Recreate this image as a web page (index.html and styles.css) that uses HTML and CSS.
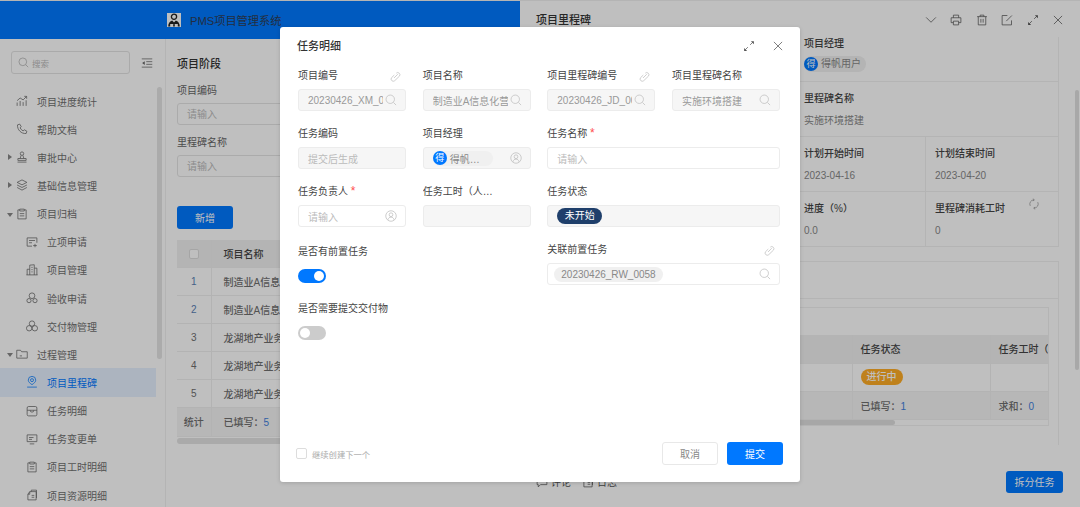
FILE: index.html
```html
<!DOCTYPE html>
<html lang="en">
<head>
    <meta charset="UTF-8">
    <meta name="viewport" content="width=device-width, initial-scale=1.0">
    <title>任务明细</title>
    <link rel="stylesheet" href="styles.css">
</head>
<body>

    <!-- icons -->
    <svg class="sprite" xmlns="http://www.w3.org/2000/svg">
        <symbol id="i-search" viewBox="0 0 16 16"><circle cx="7" cy="7" r="5.6"/><path d="M11.2 11.2 14.8 14.8"/></symbol>
        <symbol id="i-link" viewBox="0 0 16 16"><path d="M6.200 9.800 10.800 5.200M9 3.800a2.700 2.700 0 0 1 3.800 3.800L7 13.200a2.700 2.700 0 0 1-3.800-3.800L6.500 6.200"/></symbol>
        <symbol id="i-user" viewBox="0 0 16 16"><circle cx="8" cy="8" r="7"/><circle cx="8" cy="6.300" r="2.500"/><path d="M3.800 13.200c.6-2.500 2.200-3.700 4.200-3.700s3.600 1.200 4.200 3.700"/></symbol>
        <symbol id="i-expand" viewBox="0 0 16 16"><path d="M9.500 6.500 13 3M6.500 9.500 3 13"/><path class="solid" d="M10.500 1.500h4v4zM1.500 10.500v4h4z"/></symbol>
        <symbol id="i-close" viewBox="0 0 16 16"><path d="M2.500 2.500 13.500 13.500M13.500 2.500 2.500 13.500"/></symbol>
        <symbol id="i-down" viewBox="0 0 16 16"><path d="M1.500 4.500 8 11l6.500-6.500"/></symbol>
        <symbol id="i-print" viewBox="0 0 16 16"><path d="M4.500 5V1.500h7V5M4.500 11.500H1.500V5h13v6.500h-3"/><path d="M4.500 9.500h7v5h-7z"/></symbol>
        <symbol id="i-trash" viewBox="0 0 16 16"><path d="M1.500 3.500h13M5.500 3.500v-2h5v2M3 3.500v11h10v-11M6.500 6.500v5M9.500 6.500v5"/></symbol>
        <symbol id="i-edit" viewBox="0 0 16 16"><path d="M14 8.500v6H1.500V2h7"/><path d="M7 9.500 14.500 2"/></symbol>
        <symbol id="i-refresh" viewBox="0 0 16 16"><path d="M3 10.500a5.500 5.500 0 0 1 5-8M13 5.500a5.500 5.500 0 0 1-5 8"/><path d="M6.500 1 8.500 2.500 6.500 4M9.500 12 7.500 13.500 9.500 15"/></symbol>
        <symbol id="i-fold" viewBox="0 0 16 16"><path d="M1 2.500h14M7 6.200h8M7 9.800h8M1 13.500h14"/><path class="solid" d="M5 5.500v5L1.500 8z"/></symbol>
        <symbol id="i-trend" viewBox="0 0 16 16"><path d="M1.500 14.500V10M5.500 14.500V8M9.500 14.500V9.500M13.500 14.500V7"/><path d="M1.500 7.500 5.500 4 9.500 6.500 14 2M11 1.800h3.200V5"/></symbol>
        <symbol id="i-phone" viewBox="0 0 16 16"><path d="M2 2.500 5 1.500l2 3.500-1.500 1.500c.8 1.800 2.200 3.200 4 4L11 9l3.500 2-1 3c-6.500.6-12-5-11.500-11.500z"/></symbol>
        <symbol id="i-stamp" viewBox="0 0 16 16"><circle cx="8" cy="3.500" r="2.300"/><path d="M6.800 5.800 5.500 10M9.200 5.800 10.500 10M2.500 10h11v2.500h-11zM2 14.800h12"/></symbol>
        <symbol id="i-layers" viewBox="0 0 16 16"><path d="M8 1.200 14.500 4.500 8 7.800 1.500 4.500z"/><path d="M1.500 8 8 11.300 14.500 8M1.500 11.300 8 14.800 14.500 11.300"/></symbol>
        <symbol id="i-clip" viewBox="0 0 16 16"><path d="M5 2.500H2.500v12h11v-12H11"/><path d="M5 1.500h6v2.500H5zM5 7.500h6M5 10.500h6"/></symbol>
        <symbol id="i-apply" viewBox="0 0 16 16"><path d="M8 13.500H1.500v-11h13v6.500"/><path d="M4 6h8M4 9h4M12 10.500v4.500M9.500 12.800h5"/></symbol>
        <symbol id="i-build" viewBox="0 0 16 16"><path d="M5 14.500V1.500l6-.5v13.500M5 7H1.500v7.500M11 5.500h3.500v9M.5 14.500h15M7.200 4.500h1.600M7.200 7.500h1.600M7.200 10.500h1.600"/></symbol>
        <symbol id="i-ring" viewBox="0 0 16 16"><circle cx="8" cy="5" r="3.800"/><circle cx="4" cy="11.500" r="2.800"/><circle cx="12" cy="11.500" r="2.800"/></symbol>
        <symbol id="i-tri" viewBox="0 0 16 16"><circle cx="8" cy="4.800" r="3.600"/><circle cx="4.200" cy="11" r="3.600"/><circle cx="11.800" cy="11" r="3.600"/></symbol>
        <symbol id="i-folder" viewBox="0 0 16 16"><path d="M1 3h5l1.500 2h7.500v8.500H1z"/><path d="M5 10.500h3"/></symbol>
        <symbol id="i-pin" viewBox="0 0 16 16"><path d="M8 11.500C5 9.500 3 7.800 3 5.500a5 5 0 0 1 10 0c0 2.300-2 4-5 6z"/><circle cx="8" cy="5.500" r="2"/><path d="M1.500 14.800h13"/></symbol>
        <symbol id="i-box" viewBox="0 0 16 16"><rect x="1.500" y="2" width="13" height="12.500" rx="2"/><path d="M1.500 7h13M5.500 7a2.500 2.500 0 0 0 5 0"/></symbol>
        <symbol id="i-screen" viewBox="0 0 16 16"><path d="M1.500 2.500h13v9h-13zM4 6h6M4 8.500h4M5 14.500h6"/></symbol>
        <symbol id="i-doc" viewBox="0 0 16 16"><path d="M5 3.500h8.500v11H2.500V7zM5 3.500V7H2.500M7 3.500V1.500h7V12M7.500 8.500h3.500M7.500 11h3.500"/></symbol>
        <symbol id="i-comment" viewBox="0 0 16 16"><path d="M1.500 2.500h13v9H6l-3 3v-3H1.500z"/></symbol>
    </svg>

    <div class="app">
        <header class="topbar">
            <svg class="logo" viewBox="0 0 14 14">
                <rect width="14" height="14" fill="#fff"/>
                <circle cx="7" cy="3.800" r="2.600" fill="none" stroke="#222" stroke-width="1.300"/>
                <path d="M1.200 13.500c0-3.500 1.800-5.500 4-6L7 9.500l1.800-2c2.200.5 4 2.500 4 6h-2V11h-7.600v2.500z" fill="#222"/>
                <path d="M6.500 9.500h1l.4 4H6.100z" fill="#222"/>
            </svg>
            <span class="brand">PMS项目管理系统</span>
        </header>

        <div class="main">
            <aside class="sidebar">
                <div class="side-top">
                    <div class="side-search">
                        <svg class="ico"><use href="#i-search"/></svg>
                        <span>搜索</span>
                    </div>
                    <svg class="ico fold"><use href="#i-fold"/></svg>
                </div>
                <div class="side-wrap">
                    <ul class="menu">
                        <li><svg class="ico"><use href="#i-trend"/></svg>项目进度统计</li>
                        <li><svg class="ico"><use href="#i-phone"/></svg>帮助文档</li>
                        <li class="closed"><svg class="ico"><use href="#i-stamp"/></svg>审批中心</li>
                        <li class="closed"><svg class="ico"><use href="#i-layers"/></svg>基础信息管理</li>
                        <li class="open"><svg class="ico"><use href="#i-clip"/></svg>项目归档</li>
                        <li class="sub"><svg class="ico"><use href="#i-apply"/></svg>立项申请</li>
                        <li class="sub"><svg class="ico"><use href="#i-build"/></svg>项目管理</li>
                        <li class="sub"><svg class="ico"><use href="#i-ring"/></svg>验收申请</li>
                        <li class="sub"><svg class="ico"><use href="#i-tri"/></svg>交付物管理</li>
                        <li class="open"><svg class="ico"><use href="#i-folder"/></svg>过程管理</li>
                        <li class="sub active"><svg class="ico"><use href="#i-pin"/></svg>项目里程碑</li>
                        <li class="sub"><svg class="ico"><use href="#i-box"/></svg>任务明细</li>
                        <li class="sub"><svg class="ico"><use href="#i-screen"/></svg>任务变更单</li>
                        <li class="sub"><svg class="ico"><use href="#i-clip"/></svg>项目工时明细</li>
                        <li class="sub"><svg class="ico"><use href="#i-doc"/></svg>项目资源明细</li>
                    </ul>
                    <div class="side-thumb"></div>
                </div>
            </aside>

            <section class="content">
                <h3 class="content-title">项目阶段</h3>
                <div class="filter-label">项目编码</div>
                <div class="filter-input">请输入</div>
                <div class="filter-label">里程碑名称</div>
                <div class="filter-input">请输入</div>
                <button class="btn btn-primary add-btn">新增</button>
                <table class="list">
                    <tr><th class="idx"><span class="check"></span></th><th>项目名称</th></tr>
                    <tr><td class="idx num">1</td><td>制造业A信息化</td></tr>
                    <tr><td class="idx num">2</td><td>制造业A信息化</td></tr>
                    <tr><td class="idx">3</td><td>龙湖地产业务</td></tr>
                    <tr><td class="idx">4</td><td>龙湖地产业务</td></tr>
                    <tr><td class="idx">5</td><td>龙湖地产业务</td></tr>
                    <tr class="sum"><td class="idx">统计</td><td>已填写：<em>5</em></td></tr>
                </table>
                <div class="list-scroll"></div>
            </section>
        </div>

        <!-- milestone drawer -->
        <aside class="drawer">
            <div class="drawer-head">
                <h3>项目里程碑</h3>
                <div class="drawer-tools">
                    <svg class="ico"><use href="#i-down"/></svg>
                    <svg class="ico"><use href="#i-print"/></svg>
                    <svg class="ico"><use href="#i-trash"/></svg>
                    <svg class="ico"><use href="#i-edit"/></svg>
                    <svg class="ico"><use href="#i-expand"/></svg>
                    <svg class="ico"><use href="#i-close"/></svg>
                </div>
            </div>
            <div class="drawer-body">
                <div class="info-row first">
                    <div class="info"><b>项目经理</b><span class="person"><i class="avatar">得</i>得帆用户</span></div>
                </div>
                <div class="info-row">
                    <div class="info"><b>里程碑名称</b><span>实施环境搭建</span></div>
                </div>
                <div class="info-row two">
                    <div class="info"><b>计划开始时间</b><span>2023-04-16</span></div>
                    <div class="info"><b>计划结束时间</b><span>2023-04-20</span></div>
                </div>
                <div class="info-row two">
                    <div class="info"><b>进度（%）</b><span>0.0</span></div>
                    <div class="info"><b>里程碑消耗工时</b><span>0</span></div>
                    <svg class="ico refresh"><use href="#i-refresh"/></svg>
                </div>
                <div class="panel">
                    <div class="panel-head"></div>
                    <div class="task-box">
                        <div class="task-title"></div>
                        <table class="tasks">
                            <colgroup><col class="c1"><col class="c2"><col class="c3"></colgroup>
                            <tr><th>任务名称</th><th>任务状态</th><th>任务工时（人天）</th></tr>
                            <tr><td></td><td><span class="state">进行中</span></td><td></td></tr>
                            <tr class="sum"><td></td><td>已填写：<em>1</em></td><td>求和：<em>0</em></td></tr>
                        </table>
                        <div class="task-scroll"></div>
                    </div>
                </div>
            </div>
            <div class="drawer-foot">
                <div class="foot-tabs">
                    <svg class="ico"><use href="#i-comment"/></svg><span>评论</span>
                    <svg class="ico"><use href="#i-doc"/></svg><span>日志</span>
                </div>
                <button class="btn btn-dark">拆分任务</button>
            </div>
            <div class="drawer-thumb"></div>
        </aside>
    </div>

    <div class="mask"></div>

    <div class="modal">
        <div class="modal-head">
            <h3>任务明细</h3>
            <div class="modal-tools">
                <svg class="ico expand"><use href="#i-expand"/></svg>
                <svg class="ico close"><use href="#i-close"/></svg>
            </div>
        </div>

        <div class="form">
            <div class="field">
                <label>项目编号 <svg class="ico link"><use href="#i-link"/></svg></label>
                <div class="input off"><span class="val">20230426_XM_0058</span><svg class="ico"><use href="#i-search"/></svg></div>
            </div>
            <div class="field">
                <label>项目名称</label>
                <div class="input off"><span class="val">制造业A信息化营销项目</span><svg class="ico"><use href="#i-search"/></svg></div>
            </div>
            <div class="field">
                <label>项目里程碑编号 <svg class="ico link"><use href="#i-link"/></svg></label>
                <div class="input off"><span class="val">20230426_JD_0058</span><svg class="ico"><use href="#i-search"/></svg></div>
            </div>
            <div class="field">
                <label>项目里程碑名称</label>
                <div class="input off"><span class="val">实施环境搭建</span><svg class="ico"><use href="#i-search"/></svg></div>
            </div>

            <div class="field">
                <label>任务编码</label>
                <div class="input off"><span class="val hint">提交后生成</span></div>
            </div>
            <div class="field">
                <label>项目经理</label>
                <div class="input off">
                    <span class="val"><span class="chip user"><i class="avatar">得</i>得帆…</span></span>
                    <svg class="ico"><use href="#i-user"/></svg>
                </div>
            </div>
            <div class="field wide">
                <label><span>任务名称 <em class="req">*</em></span></label>
                <div class="input"><span class="val hint">请输入</span></div>
            </div>

            <div class="field">
                <label><span>任务负责人 <em class="req">*</em></span></label>
                <div class="input"><span class="val hint">请输入</span><svg class="ico"><use href="#i-user"/></svg></div>
            </div>
            <div class="field">
                <label><span class="cut">任务工时（人天）</span></label>
                <div class="input off"></div>
            </div>
            <div class="field wide">
                <label>任务状态</label>
                <div class="input off"><span class="state navy">未开始</span></div>
            </div>

            <div class="field wide switch-field">
                <label>是否有前置任务</label>
                <span class="switch on"></span>
            </div>
            <div class="field wide">
                <label>关联前置任务 <svg class="ico link"><use href="#i-link"/></svg></label>
                <div class="input chips"><span class="val"><span class="chip">20230426_RW_0058</span></span><svg class="ico"><use href="#i-search"/></svg></div>
            </div>

            <div class="field wide switch-field tight">
                <label>是否需要提交交付物</label>
                <span class="switch"></span>
            </div>
        </div>

        <div class="modal-foot">
            <div class="next"><span class="check"></span>继续创建下一个</div>
            <div class="modal-btns">
                <button class="btn btn-plain">取消</button>
                <button class="btn btn-primary">提交</button>
            </div>
        </div>
    </div>

</body>
</html>
```

FILE: styles.css
```css
* {
    box-sizing: border-box;
}
html, body {
    height: 100%;
}
body {
    margin: 0;
    overflow: hidden;
    font-family: "Liberation Sans", "Noto Sans CJK SC", sans-serif;
    font-size: 10px;
    color: #555;
    background-color: #fff;
}
h3 {
    margin: 0;
    font-size: 11px;
    font-weight: 500;
    color: #333;
}
em {
    font-style: normal;
}
ul {
    margin: 0;
    padding: 0;
    list-style: none;
}
.sprite {
    display: none;
}
.ico {
    flex: none;
    width: 12px;
    height: 12px;
    fill: none;
    stroke: #bdbdbd;
    stroke-width: 1;
}
.solid {
    fill: currentColor;
    stroke: none;
}

.app {
    position: relative;
    height: 100%;
    display: flex;
    flex-direction: column;
}
.mask {
    position: absolute;
    inset: 0;
    background-color: rgba(0, 0, 0, 0.25);
}

/* top bar */
.topbar {
    flex: none;
    height: 39px;
    padding-left: 167px;
    display: flex;
    align-items: center;
    gap: 9px;
    background-color: #0078ff;
    border-top: 1px solid #f0f0f0;
}
.logo {
    width: 14px;
    height: 14px;
}
.brand {
    font-size: 11.2px;
    color: #2f3d55;
}

.main {
    flex: 1;
    min-height: 0;
    display: flex;
}

/* sidebar */
.sidebar {
    flex: none;
    width: 166px;
    border-right: 1px solid #f0f0f0;
    overflow: hidden;
}
.side-top {
    display: flex;
    align-items: center;
    gap: 11px;
    padding: 12px 0 0 11px;
}
.side-search {
    width: 119px;
    height: 23px;
    padding-left: 6px;
    display: flex;
    align-items: center;
    gap: 3px;
    border: 1px solid #e3e3e3;
    border-radius: 3px;
    font-size: 8.5px;
    color: #bbb;
}
.side-search .ico {
    width: 11px;
    height: 11px;
    stroke: #aaa;
}
.fold {
    color: #666;
    stroke: #666;
}
.side-wrap {
    display: flex;
    padding-top: 13px;
}
.menu {
    flex: none;
    width: 156px;
}
.menu li {
    position: relative;
    height: 28.15px;
    padding-left: 37px;
    display: flex;
    align-items: center;
    color: #6f6f6f;
    white-space: nowrap;
}
.menu .ico {
    position: absolute;
    left: 16px;
    top: 8px;
    stroke: #666;
}
.menu .sub {
    padding-left: 47px;
}
.menu .sub .ico {
    left: 26px;
}
.menu .closed::before,
.menu .open::before {
    content: "";
    position: absolute;
    border-style: solid;
    border-color: transparent;
}
.menu .closed::before {
    left: 8px;
    top: 11px;
    border-width: 3px 0 3px 4px;
    border-left-color: #888;
}
.menu .open::before {
    left: 7px;
    top: 13px;
    border-width: 4px 3px 0 3px;
    border-top-color: #888;
}
.menu .active {
    color: #0078ff;
    background-color: #e6f1ff;
}
.menu .active .ico {
    stroke: #0078ff;
}
.side-thumb {
    flex: none;
    width: 5px;
    height: 272px;
    margin-left: 1px;
    border-radius: 3px;
    background-color: #e4e4e4;
}

/* page content behind the drawer */
.content {
    flex: 1;
    padding: 16px 0 0 11px;
    overflow: hidden;
}
.content-title {
    height: 16px;
    line-height: 18px;
}
.filter-label {
    height: 14px;
    margin-top: 12px;
    line-height: 16px;
    color: #666;
}
.filter-input {
    width: 260px;
    height: 22px;
    margin-top: 6px;
    padding-left: 9px;
    line-height: 22px;
    border: 1px solid #e5e5e5;
    border-radius: 3px;
    color: #bbb;
}
.filter-input + .filter-label {
    margin-top: 10px;
}
.btn {
    height: 23px;
    padding: 0;
    border: 0;
    border-radius: 3px;
    font: inherit;
    cursor: pointer;
}
.btn-primary {
    width: 56px;
    color: #fff;
    background-color: #0078ff;
}
.btn-plain {
    width: 56px;
    color: #888;
    background-color: #fff;
    border: 1px solid #e8e8e8;
}
.add-btn {
    display: block;
    margin-top: 29px;
}
.list {
    width: 343px;
    margin-top: 11px;
    border-collapse: collapse;
    table-layout: fixed;
}
.list th, .list td {
    height: 28px;
    padding: 0 0 0 12px;
    text-align: left;
    font-weight: 500;
    white-space: nowrap;
    overflow: hidden;
    border-bottom: 1px solid #efefef;
    color: #6f6f6f;
}
.list th {
    height: 27px;
    background-color: #f0f0f0;
    color: #444;
}
.list .idx {
    width: 34px;
    padding: 0;
    text-align: center;
    border-right: 1px solid #efefef;
}
.list .num {
    color: #5b7fb5;
}
.list .sum td {
    height: 29px;
    background-color: #f5f5f5;
}
.list em, .tasks em {
    color: #3f7fdc;
}
.check {
    display: inline-block;
    width: 10px;
    height: 10px;
    border: 1px solid #ddd;
    border-radius: 2px;
    background-color: #fff;
    vertical-align: middle;
}
.list-scroll {
    width: 343px;
    height: 6px;
    margin-top: 1px;
    border-radius: 3px;
    background-color: #e3e3e3;
}

/* drawer */
.drawer {
    position: absolute;
    left: 520px;
    top: 0;
    right: 0;
    bottom: 0;
    display: flex;
    flex-direction: column;
    background-color: #fff;
    border-top: 1px solid #f0f0f0;
}
.drawer-head {
    flex: none;
    height: 36px;
    padding: 0 16px 0 16px;
    display: flex;
    align-items: center;
    justify-content: space-between;
}
.drawer-tools {
    display: flex;
    gap: 13.5px;
    margin-top: 2px;
}
.drawer-tools .ico {
    stroke: #555;
    color: #555;
}
.drawer-body {
    flex: 1;
    min-height: 0;
    padding: 0 21px 0 16px;
    overflow: hidden;
}
.info-row {
    position: relative;
    height: 55px;
    padding-left: 268px;
    display: flex;
    border-bottom: 1px solid #f0f0f0;
    border-right: 1px solid #f0f0f0;
}
.info {
    flex: 1;
    padding-top: 10px;
    line-height: 14px;
}
.info b {
    display: block;
    margin-bottom: 8px;
    font-weight: 500;
    color: #444;
}
.info span {
    display: block;
    color: #888;
}
.info-row.two .info:first-child {
    flex: none;
    width: 121px;
}
.info-row.two .info + .info {
    padding-left: 9px;
    border-left: 1px solid #f0f0f0;
}
.info-row.first {
    height: 45px;
}
.info-row.first .info {
    padding-top: 0;
}
.info-row.first b {
    margin-bottom: 5px;
}
.info .person {
    display: inline-flex;
    align-items: center;
    gap: 3px;
    height: 16px;
    width: 62px;
    border-radius: 8px;
    background-color: #f0f0f0;
}
.avatar {
    flex: none;
    width: 14px;
    height: 14px;
    border-radius: 50%;
    font-style: normal;
    font-size: 9px;
    line-height: 14px;
    text-align: center;
    color: #fff;
    background-color: #0078ff;
}
.refresh {
    position: absolute;
    right: 18px;
    top: 6px;
    stroke: #999;
}
.panel {
    height: 184px;
    margin-top: 14px;
    padding: 0 9px;
    border: 1px solid #f0f0f0;
    border-bottom: 0;
}
.panel-head {
    height: 37px;
    margin: 0 -9px 8px;
    border-bottom: 1px solid #f0f0f0;
}
.task-box {
    border: 1px solid #f0f0f0;
    overflow: hidden;
}
.task-title {
    height: 27px;
}
.tasks {
    width: 502px;
    border-collapse: collapse;
    table-layout: fixed;
}
.tasks .c1 {
    width: 305px;
}
.tasks .c2 {
    width: 138px;
}
.tasks th, .tasks td {
    height: 28px;
    padding: 0 0 0 8px;
    text-align: left;
    font-weight: 500;
    white-space: nowrap;
    overflow: hidden;
    color: #6f6f6f;
    border-right: 1px solid #efefef;
    border-bottom: 1px solid #efefef;
}
.tasks th {
    background-color: #f0f0f0;
    color: #444;
}
.tasks .sum td {
    background-color: #f5f5f5;
}
.state {
    display: inline-block;
    height: 16px;
    padding: 0 6px;
    line-height: 16px;
    border-radius: 8px;
    color: #fff;
    background-color: #ffad26;
}
.state.navy {
    padding: 0 7.5px;
    background-color: #1f3f6b;
}
.task-scroll {
    height: 5px;
    width: 143px;
    margin-left: 205px;
    border-radius: 3px;
    background-color: #dfdfdf;
}
.drawer-foot {
    flex: none;
    height: 36px;
    padding: 0 17px 15px 16px;
    display: flex;
    align-items: center;
    justify-content: space-between;
}
.foot-tabs {
    display: flex;
    align-items: center;
    gap: 3px;
    color: #555;
}
.foot-tabs span {
    margin-right: 8px;
}
.foot-tabs .ico {
    stroke: #555;
}
.btn-dark {
    width: 57px;
    height: 22px;
    color: #fff;
    background-color: #0078ff;
}
.drawer-thumb {
    position: absolute;
    right: 1px;
    top: 89px;
    width: 4px;
    height: 280px;
    border-radius: 2px;
    background-color: #e0e0e0;
}

/* modal */
.modal {
    position: absolute;
    left: 280px;
    top: 27px;
    width: 520px;
    height: 455px;
    display: flex;
    flex-direction: column;
    border-radius: 3px;
    background-color: #fff;
    box-shadow: 0 1px 4px rgba(0, 0, 0, 0.15);
}
.modal-head {
    flex: none;
    height: 41px;
    padding: 11px 17px 0 17px;
    display: flex;
    justify-content: space-between;
}
.modal-head h3 {
    line-height: 16px;
}
.modal-tools {
    display: flex;
    gap: 16px;
    padding-top: 2px;
    padding-right: 0;
}
.modal-tools .ico {
    stroke: #555;
    color: #555;
}
.modal-tools .close {
    margin-left: 1px;
    margin-right: -1px;
}
.form {
    flex: 1;
    padding: 1px 20px 0 18px;
    display: grid;
    grid-template-columns: repeat(4, 108px);
    grid-auto-rows: 58px;
    column-gap: 16.67px;
    align-content: start;
}
.field {
    min-width: 0;
}
.field.wide {
    grid-column: span 2;
}
.field label {
    height: 14px;
    margin-bottom: 6px;
    display: flex;
    align-items: center;
    justify-content: space-between;
    line-height: 14px;
    color: #444;
}
.link {
    width: 13px;
    height: 13px;
    margin-right: 4px;
    stroke: #c4c4c4;
}
.req {
    font-size: 12px;
    line-height: 10px;
    color: #ff4d4f;
}
.cut {
    display: block;
    max-width: 70px;
    overflow: hidden;
    white-space: nowrap;
    text-overflow: ellipsis;
}
.input {
    height: 22px;
    padding: 0 8px 0 9px;
    display: flex;
    align-items: center;
    gap: 2px;
    border: 1px solid #ececec;
    border-radius: 3px;
    background-color: #fff;
}
.input.off {
    background-color: #f6f6f6;
}
.val {
    flex: 1;
    min-width: 0;
    overflow: hidden;
    white-space: nowrap;
    color: #999;
}
.val.hint {
    color: #bbb;
}
.chip {
    display: inline-flex;
    align-items: center;
    height: 15px;
    padding: 0 7px;
    border-radius: 8px;
    color: #888;
    background-color: #f0f0f0;
}
.chip.user {
    width: 60px;
    padding: 0;
    gap: 3px;
}
.input.chips {
    padding-left: 6px;
}
.switch-field {
    margin-top: 2px;
}
.switch-field.tight {
    margin-top: 1px;
}
.switch-field label {
    margin-bottom: 10px;
}
.switch {
    display: block;
    position: relative;
    width: 28px;
    height: 14px;
    border-radius: 7px;
    background-color: #ccc;
}
.switch::after {
    content: "";
    position: absolute;
    left: 2px;
    top: 2px;
    width: 10px;
    height: 10px;
    border-radius: 50%;
    background-color: #fff;
}
.switch.on {
    background-color: #0078ff;
}
.switch.on::after {
    left: 16px;
}
.modal-foot {
    flex: none;
    padding: 0 17px 17px 16px;
    display: flex;
    align-items: center;
    justify-content: space-between;
}
.next {
    display: flex;
    align-items: center;
    gap: 5px;
    font-size: 8.3px;
    color: #aaa;
}
.next .check {
    width: 11px;
    height: 11px;
}
.modal-btns {
    display: flex;
    gap: 9px;
}
```
